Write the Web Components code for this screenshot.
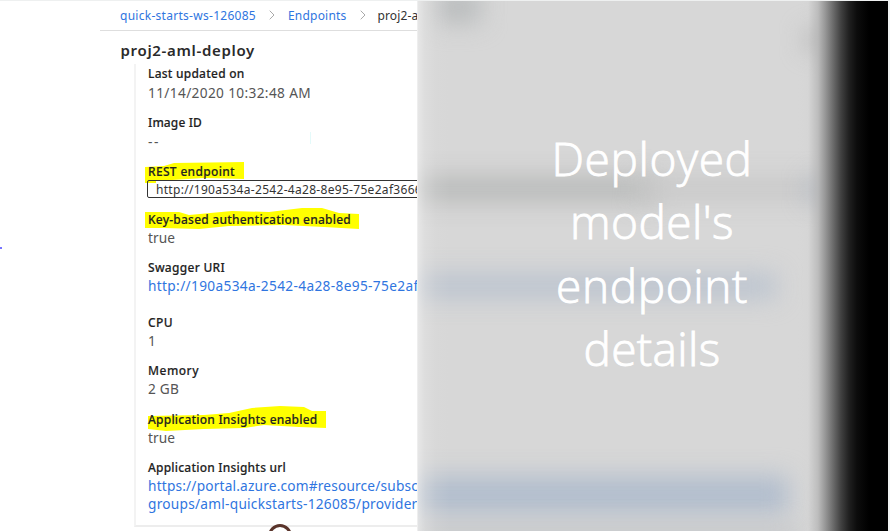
<!DOCTYPE html>
<html lang="en"><head><meta charset="utf-8"><title>Endpoint details</title>
<style>body{margin:0;background:#fff;overflow:hidden}</style></head><body>
<endpoint-slide></endpoint-slide>
<script>
// Text run whose tracking is adjusted so that it spans a given width.
class FitText extends HTMLElement{
  connectedCallback(){
    if(!this.shadowRoot) this.attachShadow({mode:'open'}).innerHTML='<style>:host{display:inline-block;white-space:nowrap}span{display:inline-block}</style><span><slot></slot></span>';
    const w=+this.getAttribute('w'), s=this.shadowRoot.querySelector('span');
    if(w) s.style.letterSpacing=((w-s.getBoundingClientRect().width)/this.textContent.length)+'px';
  }
}
class CrumbBar extends HTMLElement{
  constructor(){super();this.attachShadow({mode:'open'}).innerHTML=`<style>
  :host{display:flex;height:29px;border-bottom:1px solid #dedede;padding-left:20px;align-items:center;font-size:12px;color:#2f75e0;white-space:nowrap}
  svg{width:6px;height:10px;margin:0 13px 1px;flex:none}
  svg path{fill:none;stroke:#aaa;stroke-width:1}
  .now{color:#333;margin-left:-1px}</style>
  <fit-text w="136">quick-starts-ws-126085</fit-text><svg viewBox="0 0 6 10"><path d="M.7.7 5 5 .7 9.3"/></svg>
  <fit-text w="58.5">Endpoints</fit-text><svg viewBox="0 0 6 10"><path d="M.7.7 5 5 .7 9.3"/></svg>
  <fit-text class="now" w="98">proj2-aml-deploy</fit-text>`}
}
class DetailField extends HTMLElement{
  constructor(){super();this.attachShadow({mode:'open'}).innerHTML=`<style>
  :host{display:block;height:48px;position:relative;color:#555;font-size:13.7px;line-height:18px;white-space:nowrap}
  .l{height:20px;line-height:var(--label-line,21px);font-size:12px;font-weight:500;color:#222;-webkit-text-stroke:.15px #222;position:relative}
  .v{position:relative}
  ::slotted([slot=mark]){position:absolute;left:-4px;top:-6px;overflow:visible}</style>
  <slot name="mark"></slot><div class="l"><slot name="label"></slot></div><div class="v"><slot></slot></div>`}
}
class BlurPanel extends HTMLElement{
  constructor(){super();this.attachShadow({mode:'open'}).innerHTML=`<style>
  :host{display:block;position:relative;overflow:hidden;height:530px;width:470px;background:#d7d7d7}
  i{position:absolute;filter:blur(12px)}
  .edge{position:absolute;inset:0;background:linear-gradient(90deg,#eeeeeeaa 0,#e4e4e477 7px,#dcdcdc33 18px,#d7d7d700 32px,#d0d0d000 380px,#d0d0d033 390px,#b6b6b6cc 400px,#989898 407px,#6c6c6c 415px,#414141 423px,#202020 431px,#0c0c0c 439px,#000 451px)}
  .t{position:absolute;left:115px;top:126px;width:238px;text-align:center;color:#fff;font:300 46px/63.3px "Open Sans","Noto Sans",sans-serif;-webkit-text-stroke:.9px #fff}
  .t fit-text{display:block}</style>
  <i style="left:18px;top:-10px;width:45px;height:32px;background:#b9bcbd"></i>
  <i style="left:388px;top:30px;width:45px;height:18px;background:#b0b0b0"></i>
  <i style="left:-20px;top:177px;width:260px;height:22px;background:#b4b6b5"></i>
  <i style="left:220px;top:177px;width:200px;height:22px;background:#c8c8c8"></i>
  <i style="left:390px;top:178px;width:35px;height:22px;background:#b0b7c2"></i>
  <i style="left:-20px;top:273px;width:378px;height:24px;background:#bac3cf"></i>
  <i style="left:-20px;top:475px;width:390px;height:38px;background:#b1bdcd"></i>
  <i style="left:-20px;top:525px;width:400px;height:18px;background:#c3c5c8"></i>
  <div class="edge"></div>
  <div class="t"><fit-text w="201">Deployed</fit-text><fit-text w="164">model's</fit-text><fit-text w="192">endpoint</fit-text><fit-text w="137">details</fit-text></div>`}
}
class EndpointSlide extends HTMLElement{
  constructor(){super();this.attachShadow({mode:'open'}).innerHTML=`<style>
  :host{display:grid;grid-template-columns:100px 317px 1px 470px 2px;grid-template-rows:1px 530px;width:890px;height:531px;overflow:hidden;font-family:"Noto Sans","Open Sans",sans-serif}
  .top{grid-column:1/-1;background:#eef0f0}
  .gut{position:relative}
  .dash{position:absolute;left:0;top:246px;width:2px;height:2px;background:#7774ff}
  .main{overflow:hidden;position:relative}
  h1{margin:0;height:37px;padding-left:20.5px;font-size:15px;line-height:38px;font-weight:600;color:#2a2a2a}
  .card{margin-left:34px;height:456px;border-left:2px solid #f3f3f3;border-bottom:2px solid #ededed;padding-left:12px}
  .card{height:457px;margin-top:0;padding-bottom:0;box-sizing:content-box;transform:none}
  .fields{margin-top:-4px}
  svg path{fill:#ff0}
  a{color:#2f75e0}
  .box{margin:-1px 0 0 -1px;width:300px;height:16px;border:1.5px solid #333;border-radius:2px;padding-left:8px;font-size:12px;line-height:17px;color:#333}
  .ring{position:absolute;left:168px;top:523px;width:18px;height:18px;border:3px solid #5a342b;border-radius:50%}
  .tick{position:absolute;left:210px;top:131px;width:1px;height:12px;background:#e4fafa}
  .up{--label-line:19px}
  .seam{background:#eee}.end{background:#f0f2f2}</style>
  <div class="top"></div>
  <div class="gut"><div class="dash"></div></div>
  <div class="main"><crumb-bar></crumb-bar><h1><fit-text w="134.5">proj2-aml-deploy</fit-text></h1>
   <div class="card"><div class="fields">
   <detail-field class="up" style="height:49px"><fit-text slot="label" w="96.5">Last updated on</fit-text><fit-text w="163">11/14/2020 10:32:48 AM</fit-text></detail-field>
   <detail-field class="up"><fit-text slot="label" w="54">Image ID</fit-text><fit-text w="12">--</fit-text></detail-field>
   <detail-field><svg slot="mark" width="100" height="30"><path d="M1 12 20 11 30 8 100 7V24L60 23 12 26V28H1Z"/></svg><fit-text slot="label" w="87">REST endpoint</fit-text><div class="box"><fit-text w="266">http://190a534a-2542-4a28-8e95-75e2af3666</fit-text></div></detail-field>
   <detail-field><svg slot="mark" width="216" height="30"><path d="M1 9 35 9 45 12 88 8 125 9 158 5 178 5 195 10 215 11V26L180 24 140 22 85 23 55 26 20 25H1Z"/></svg><fit-text slot="label" w="203">Key-based authentication enabled</fit-text><fit-text w="27">true</fit-text></detail-field>
   <detail-field style="height:55px"><fit-text slot="label" w="77">Swagger URI</fit-text><a><fit-text w="270.5">http://190a534a-2542-4a28-8e95-75e2af</fit-text></a></detail-field>
   <detail-field><fit-text slot="label" w="25">CPU</fit-text>1</detail-field>
   <detail-field style="height:49px"><fit-text slot="label" w="51">Memory</fit-text><fit-text w="31">2 GB</fit-text></detail-field>
   <detail-field><svg slot="mark" width="182" height="30"><path d="M4 13 60 12 85 10 108 5 136 3 160 4 168 8 182 8V25L155 24 120 22 100 25 60 26 22 28 4 26Z"/></svg><fit-text slot="label" w="169.5">Application Insights enabled</fit-text><fit-text w="27">true</fit-text></detail-field>
   <detail-field style="height:65px"><fit-text slot="label" w="138">Application Insights url</fit-text><a><fit-text w="270">https://portal.azure.com#resource/subsc</fit-text><br><fit-text w="269.5">groups/aml-quickstarts-126085/provider</fit-text></a></detail-field>
   </div></div><div class="ring"></div><div class="tick"></div></div>
  <div class="seam"></div><blur-panel></blur-panel><div class="end"></div>`;
  this.shadowRoot.querySelector('.card').style.height='461px'}
}
customElements.define('fit-text',FitText);
customElements.define('crumb-bar',CrumbBar);
customElements.define('detail-field',DetailField);
customElements.define('blur-panel',BlurPanel);
customElements.define('endpoint-slide',EndpointSlide);
</script></body></html>
